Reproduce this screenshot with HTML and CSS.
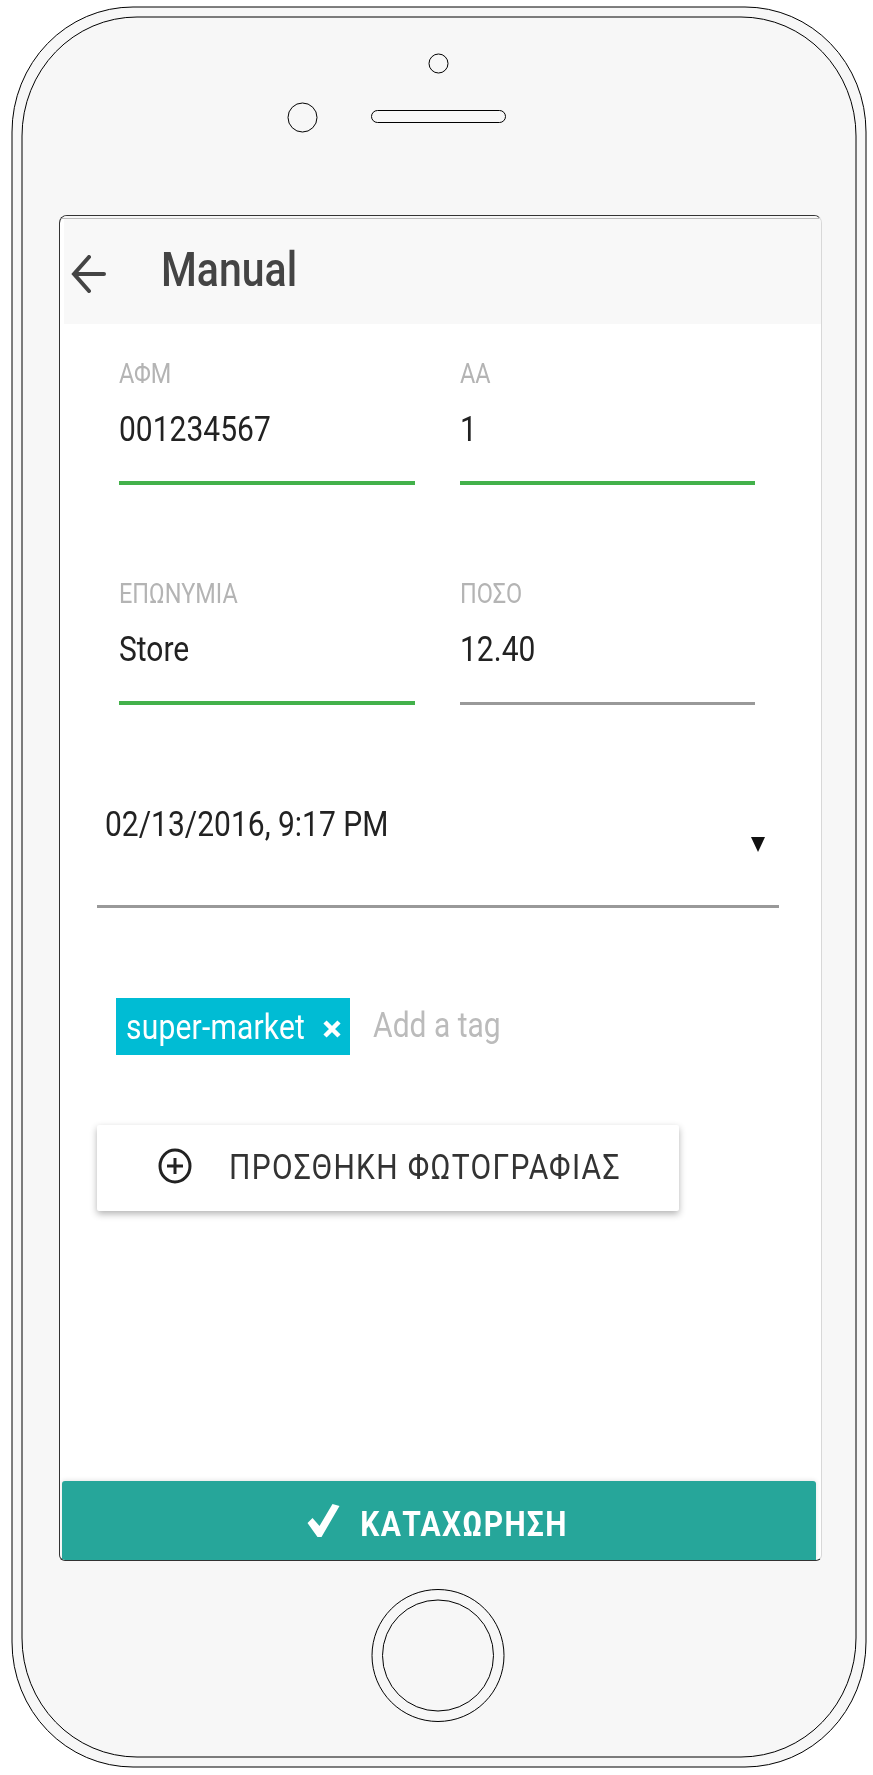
FILE: index.html
```html
<!DOCTYPE html>
<html lang="el">

<head>
    <meta charset="UTF-8">
    <meta name="viewport" content="width=device-width, initial-scale=1.0">
    <title>Manual</title>
    <link rel="stylesheet" href="styles.css">
</head>

<body>
    <div class="phone">
        <!-- device outline: body, camera, speaker, home button -->
        <svg class="phone-outline" width="873" height="1775" viewBox="0 0 873 1775" fill="none" stroke="#000" stroke-width="1">
            <rect x="12" y="7" width="854" height="1760" rx="121" ry="125" fill="#f7f7f7"/>
            <rect x="22" y="17" width="834" height="1740" rx="115" ry="119"/>
            <circle cx="438.5" cy="63.5" r="9.5"/>
            <circle cx="302.5" cy="117.5" r="14.5"/>
            <rect x="371.5" y="110.5" width="134" height="12" rx="6"/>
            <circle cx="438" cy="1655.5" r="66"/>
            <circle cx="438" cy="1655.5" r="55.5"/>
        </svg>

        <div class="screen">
            <div class="screen-top"></div>
            <header class="appbar">
                <svg class="back-icon" width="35" height="38" viewBox="0 0 35 38" fill="none" stroke="#444" stroke-width="4" stroke-linecap="round">
                    <path d="M33 19H3M18 2L3 19L18 36"/>
                </svg>
                <h1 class="appbar-title"><span class="tall">Manual</span></h1>
            </header>

            <div class="fields">
                <div class="field ok">
                    <label class="field-label"><span class="tall">ΑΦΜ</span></label>
                    <div class="field-value"><span class="tall">001234567</span></div>
                </div>
                <div class="field ok">
                    <label class="field-label"><span class="tall">ΑΑ</span></label>
                    <div class="field-value"><span class="tall">1</span></div>
                </div>
                <div class="field ok">
                    <label class="field-label"><span class="tall">ΕΠΩΝΥΜΙΑ</span></label>
                    <div class="field-value"><span class="tall">Store</span></div>
                </div>
                <div class="field">
                    <label class="field-label"><span class="tall">ΠΟΣΟ</span></label>
                    <div class="field-value"><span class="tall">12.40</span></div>
                </div>
            </div>

            <div class="date-select">
                <span class="tall">02/13/2016, 9:17 PM</span>
                <i class="caret"></i>
            </div>

            <div class="tags">
                <div class="tag">
                    <span class="tall">super-market</span>
                    <svg class="tag-remove" width="18" height="18" viewBox="0 0 18 18" stroke="#fff" stroke-width="4.5">
                        <path d="M2 2L16 16M16 2L2 16"/>
                    </svg>
                </div>
                <span class="tag-input"><span class="tall">Add a tag</span></span>
            </div>

            <button class="photo-button">
                <svg width="34" height="36" viewBox="0 0 34 36" fill="none" stroke="#222" stroke-width="3">
                    <ellipse cx="17" cy="18" rx="15" ry="16"/>
                    <path d="M17 10V26M9 18H25"/>
                </svg>
                <span class="tall">ΠΡΟΣΘΗΚΗ ΦΩΤΟΓΡΑΦΙΑΣ</span>
            </button>

            <button class="save-button">
                <svg width="33" height="33" viewBox="0 0 32 33" fill="#fff">
                    <path d="M0 19L5 14L12 22L25 0L32 2L14 33H10Z"/>
                </svg>
                <span class="tall save-label">ΚΑΤΑΧΩΡΗΣΗ</span>
            </button>
        </div>
    </div>
</body>

</html>
```

FILE: styles.css
```css
body {
    margin: 0;
    background: #fff;
    font-family: Roboto, "Liberation Sans", sans-serif;
}

.phone {
    position: relative;
    width: 873px;
    height: 1775px;
    padding: 215px 0 0 59px;
    box-sizing: border-box;
    overflow: hidden;
}

.phone-outline {
    position: absolute;
    top: 0;
    left: 0;
}

/* the source picture is stretched vertically and a bit soft, so the text is too */
.tall {
    display: inline-block;
    transform: scaleY(1.17);
    filter: blur(0.4px);
}

.screen {
    position: relative;
    display: flex;
    flex-direction: column;
    width: 763px;
    height: 1346px;
    box-sizing: border-box;
    background: #fff;
    border: 1px solid #333;
    border-right-color: #d8d8d8;
    border-radius: 8px 8px 6px 6px;
    overflow: hidden;
}

.screen-top {
    height: 2px;
    background: #f7f7f7;
    border-bottom: 1px solid #bbb;
}

.appbar {
    display: flex;
    align-items: center;
    gap: 55px;
    height: 105px;
    margin-left: 4px;
    padding-left: 7px;
    background: #f8f8f8;
}

.back-icon {
    margin-top: 5px;
}

.appbar-title {
    margin: 0 0 4px 0;
    font-size: 41px;
    font-weight: 500;
    color: #444;
}

.fields {
    display: grid;
    grid-template-columns: 296px 295px;
    column-gap: 45px;
    row-gap: 96px;
    padding: 37px 0 0 59px;
}

.field {
    padding-bottom: 34px;
    border-bottom: 3px solid #999;
}

.field.ok {
    border-bottom: 4px solid #43b14b;
}

.field-label {
    display: block;
    font-size: 23.5px;
    line-height: 26px;
    color: #b4b4b4;
}

.field-value {
    margin-top: 24px;
    font-size: 30px;
    line-height: 36px;
    color: #222;
}

.date-select {
    display: flex;
    justify-content: space-between;
    margin: 102px 42px 0 37px;
    padding: 0 14px 53px 8px;
    border-bottom: 3px solid #999;
    font-size: 30px;
    line-height: 36px;
    color: #222;
}

.caret {
    width: 0;
    height: 0;
    margin-top: 30px;
    border-top: 15px solid #111;
    border-left: 7px solid transparent;
    border-right: 7px solid transparent;
}

.tags {
    display: flex;
    align-items: center;
    gap: 23px;
    margin: 90px 0 0 56px;
    font-size: 30px;
}

.tag {
    display: flex;
    align-items: center;
    gap: 18px;
    height: 57px;
    padding: 0 9px 0 10px;
    background: #00bcd4;
    color: #fff;
    letter-spacing: 0.2px;
}

.tag-remove {
    margin-top: 4px;
}

.tag-input {
    color: #bbb;
    margin-bottom: 4px;
}

.photo-button {
    display: flex;
    align-items: center;
    gap: 37px;
    width: 582px;
    height: 86px;
    margin: 70px 0 0 37px;
    padding: 0 0 4px 61px;
    background: #fff;
    border: none;
    border-radius: 2px;
    box-shadow: 0 3px 7px rgba(0, 0, 0, 0.3);
    font-family: inherit;
    font-size: 30px;
    letter-spacing: 1.3px;
    color: #333;
}

.save-button {
    display: flex;
    align-items: center;
    justify-content: center;
    gap: 20px;
    height: 79px;
    margin: auto 5px 0 2px;
    padding: 0 3px 0 0;
    background: #26a69a;
    border: none;
    border-radius: 3px 3px 0 0;
    box-shadow: 0 -1px 4px rgba(0, 0, 0, 0.1);
    font-family: inherit;
    font-size: 30px;
    font-weight: 700;
    letter-spacing: 1.3px;
    color: #fff;
}

.save-label {
    margin-top: 5px;
}
```
